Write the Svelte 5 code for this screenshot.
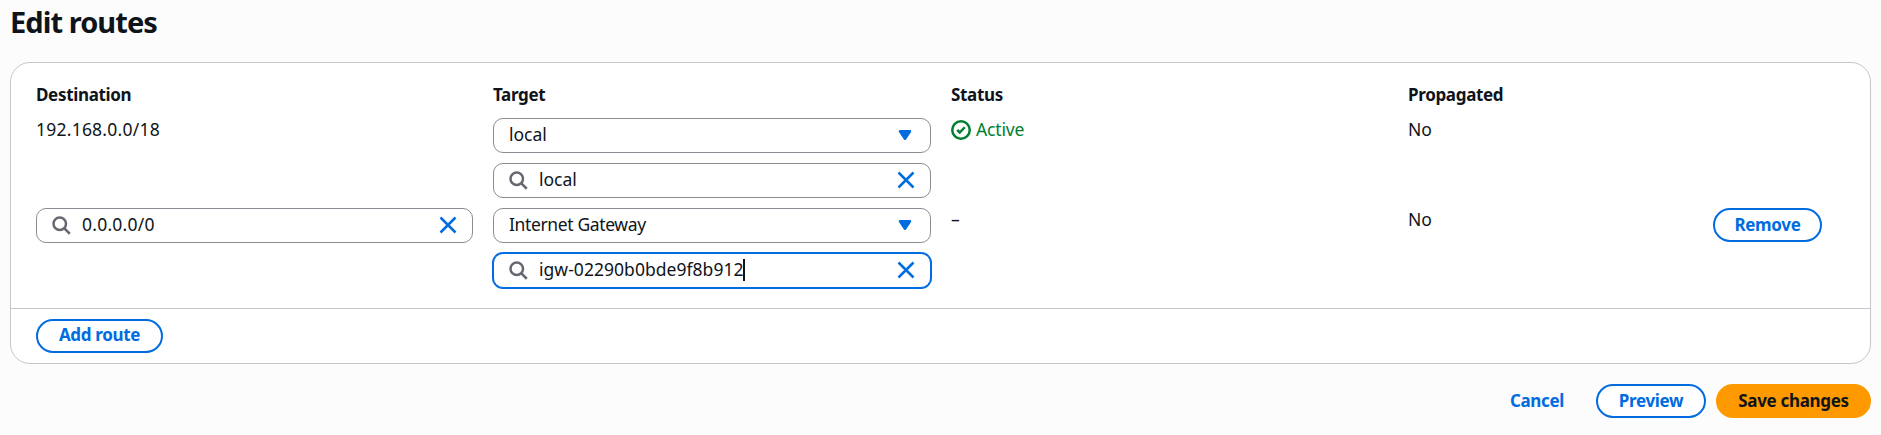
<script>
  const columns = ['Destination', 'Target', 'Status', 'Propagated'];
</script>

{#snippet search()}
  <svg class="icon search" viewBox="0 0 16 16"><circle cx="7" cy="7" r="5" /><path d="m15 15-4.5-4.5" /></svg>
{/snippet}

{#snippet field(value, kind, focused = false)}
  <div class="field {kind}" class:focused>
    {@render search()}
    <span class="value">{value}</span>
    {#if focused}<i class="caret"></i>{/if}
    <svg class="icon clear" viewBox="0 0 16 16"><path d="m2 2 12 12M14 2 2 14" /></svg>
  </div>
{/snippet}

{#snippet select(value, kind)}
  <div class="field select {kind}">
    <span class="value">{value}</span>
    <svg class="icon arrow" viewBox="0 0 16 16"><path d="M4 5h8l-4 6-4-6z" /></svg>
  </div>
{/snippet}

<main>
  <h1>Edit routes</h1>
  <section class="card">
    <div class="routes">
      <div class="row head">
        {#each columns as column}<div class="label">{column}</div>{/each}
      </div>
      <div class="row">
        <div class="text ip">192.168.0.0/18</div>
        <div class="stack">
          {@render select('local', 'word')}
          {@render field('local', 'word')}
        </div>
        <div class="text status">
          <svg class="icon ok" viewBox="0 0 16 16"><circle cx="8" cy="8" r="7" /><path d="m5 8 2 2 4-4.2" /></svg>
          <span>Active</span>
        </div>
        <div class="text">No</div>
      </div>
      <div class="row">
        {@render field('0.0.0.0/0', 'ip')}
        <div class="stack">
          {@render select('Internet Gateway', 'phrase')}
          {@render field('igw-02290b0bde9f8b912', 'id', true)}
        </div>
        <div class="text">–</div>
        <div class="text">No</div>
        <button class="remove">Remove</button>
      </div>
    </div>
    <footer><button class="add">Add route</button></footer>
  </section>
  <div class="actions">
    <button class="link">Cancel</button>
    <button class="preview">Preview</button>
    <button class="primary">Save changes</button>
  </div>
</main>

<style>
  :global(body) {
    background: #fcfcfd;
  }
  main {
    box-sizing: border-box;
    height: 435px;
    padding: 0 10px;
    overflow: hidden;
    color: #0f141a;
    font: 17.5px/25px 'Noto Sans', 'Open Sans', sans-serif;
  }
  h1 {
    margin: 0;
    height: 62px;
    padding-top: 4px;
    box-sizing: border-box;
    font-size: 29px;
    line-height: 36px;
    letter-spacing: -0.93px;
  }
  .card {
    box-sizing: border-box;
    height: 302px;
    border: 1px solid #c6c6cd;
    border-radius: 20px;
    background: #fff;
  }
  .routes {
    box-sizing: border-box;
    height: 245px;
    padding: 19px 25px 0;
  }
  .row {
    display: grid;
    grid-template-columns: 437px 438px 437px 285px auto;
    column-gap: 20px;
    align-items: start;
    justify-content: start;
    margin-bottom: 10px;
  }
  .head {
    height: 36px;
    margin-bottom: 0;
  }
  .label,
  button {
    font-size: 17px;
    font-weight: 700;
    letter-spacing: -0.33px;
  }
  .text {
    margin-top: -1px;
  }
  .ip {
    letter-spacing: 0.23px;
  }
  .id {
    letter-spacing: 0.04px;
  }
  .phrase {
    letter-spacing: -0.37px;
  }
  .stack {
    display: grid;
    gap: 10px;
  }
  .field {
    box-sizing: border-box;
    display: flex;
    align-items: center;
    height: 35px;
    padding: 0 14px;
    border: 1px solid #8c8c94;
    border-radius: 10px;
    background: #fff;
  }
  .value {
    margin: -3px 0 0 11px;
    white-space: pre;
  }
  .select .value {
    margin-left: 1px;
  }
  .focused {
    border-color: #006ce0;
    box-shadow: 0 0 0 1px #006ce0;
  }
  .caret {
    width: 2px;
    height: 22px;
    margin: -2px 0 0 -1px;
    background: #0f141a;
  }
  .icon {
    width: 20px;
    height: 20px;
    flex: none;
    fill: none;
    stroke: #006ce0;
    stroke-width: 2;
  }
  .search {
    margin-top: -1px;
    stroke: #656871;
  }
  .clear,
  .arrow {
    margin: -1px 0 0 auto;
  }
  .arrow {
    fill: #006ce0;
    stroke-linejoin: round;
    margin-right: 1px;
  }
  .status {
    display: flex;
    align-items: center;
    gap: 5px;
    color: #00802f;
    letter-spacing: -0.15px;
  }
  .ok {
    margin-top: 1px;
    stroke: #00802f;
  }
  footer {
    display: flex;
    padding: 11px 25px 0;
    border-top: 1px solid #c6c6cd;
  }
  button {
    box-sizing: border-box;
    height: 34px;
    padding: 0 0 2px;
    border: 2px solid #006ce0;
    border-radius: 17px;
    background: #fff;
    color: #006ce0;
    font-family: inherit;
    line-height: 25px;
    white-space: nowrap;
  }
  .remove {
    width: 109px;
  }
  .add {
    width: 127px;
    margin-top: -1px;
    padding-bottom: 3px;
  }
  .actions {
    display: flex;
    justify-content: flex-end;
    gap: 10px;
    margin-top: 20px;
  }
  .link {
    width: 98px;
    border-color: transparent;
    background: none;
  }
  .preview {
    width: 110px;
  }
  .primary {
    width: 155px;
    border-color: #ff9900;
    background: #ff9900;
    color: #0f141a;
  }
</style>
